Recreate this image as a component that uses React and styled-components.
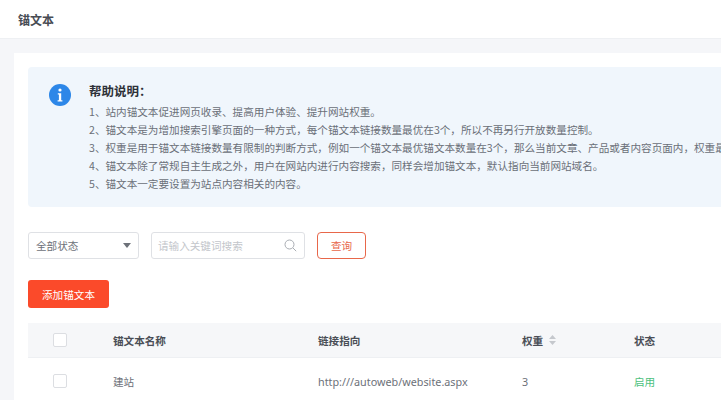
import styled, { createGlobalStyle } from "styled-components";

const GlobalStyle = createGlobalStyle`
  html, body {
    margin: 0;
    height: 400px;
    overflow: hidden;
    background: #f5f6f9;
    font-family: "Noto Sans CJK SC", "Noto Sans", sans-serif;
  }
`;

const Page = styled.div`
  width: 721px;
  height: 400px;
  overflow: hidden;
`;

const Header = styled.div`
  height: 38px;
  padding-left: 18px;
  background: #fff;
  border-bottom: 1px solid #eef0f3;
  display: flex;
  align-items: center;
  font-size: 12px;
  font-weight: 700;
  color: #484c54;
`;

const Card = styled.div`
  margin: 14px 0 0 14px;
  padding: 14px 0 0 14px;
  background: #fff;
  height: 347px;
  box-sizing: border-box;
`;

const Notice = styled.div`
  height: 140px;
  box-sizing: border-box;
  padding: 15px 0 0 21px;
  background: #f0f6fc;
  border-radius: 4px 0 0 4px;
  display: flex;
  gap: 18px;
  white-space: nowrap;
  overflow: hidden;
`;

const InfoIcon = styled.svg`
  width: 22px;
  height: 22px;
  flex: none;
  margin-top: 2px;
`;

const NoticeTitle = styled.div`
  font-size: 12.5px;
  font-weight: 700;
  line-height: 18px;
  margin-bottom: 3px;
  color: #2e3138;
`;

const NoticeLine = styled.div`
  font-size: 10.6px;
  line-height: 18px;
  color: #6a6f78;
`;

const Filters = styled.div`
  margin-top: 25px;
  display: flex;
  gap: 12px;
`;

const Select = styled.div`
  width: 111px;
  height: 27px;
  box-sizing: border-box;
  padding: 0 7px;
  border: 1px solid #dfe1e5;
  border-radius: 3px;
  display: flex;
  align-items: center;
  justify-content: space-between;
  font-size: 10.6px;
  color: #6d7179;
`;

const Caret = styled.span`
  width: 0;
  height: 0;
  border-left: 4px solid transparent;
  border-right: 4px solid transparent;
  border-top: 5px solid #6d7179;
`;

const Search = styled.div`
  width: 154px;
  height: 27px;
  box-sizing: border-box;
  padding: 0 7px 0 6px;
  border: 1px solid #dfe1e5;
  border-radius: 3px;
  display: flex;
  align-items: center;
  justify-content: space-between;
  font-size: 10.6px;
  color: #c3c6cb;
`;

const SearchIcon = styled.svg`
  width: 13px;
  height: 13px;
  fill: none;
  stroke: #a9adb3;
  stroke-width: 1;
`;

const QueryButton = styled.div`
  width: 49px;
  height: 27px;
  box-sizing: border-box;
  border: 1px solid #e8674a;
  border-radius: 4px;
  display: flex;
  align-items: center;
  justify-content: center;
  font-size: 10.6px;
  color: #e8674a;
`;

const AddButton = styled.div`
  margin-top: 21px;
  width: 81px;
  height: 28px;
  border-radius: 3px;
  background: #fb4a2a;
  display: flex;
  align-items: center;
  justify-content: center;
  font-size: 10.6px;
  color: #fff;
`;

const Row = styled.div`
  display: grid;
  grid-template-columns: 85px 205px 204px 112px 1fr;
  align-items: center;
  height: ${(p) => (p.$head ? "34px" : "46px")};
  margin-top: ${(p) => (p.$head ? "15px" : "0")};
  background: ${(p) => (p.$head ? "#f6f7f9" : "#fff")};
  border-bottom: ${(p) => (p.$head ? "1px solid #eef0f3" : "none")};
  font-size: 10.6px;
  font-weight: ${(p) => (p.$head ? 700 : 400)};
  color: ${(p) => (p.$head ? "#4a4e56" : "#6d7179")};
`;

const Checkbox = styled.span`
  display: block;
  width: 12px;
  height: 12px;
  margin-left: 25px;
  background: #fff;
  border: 1px solid #dcdee2;
  border-radius: 2px;
`;

const WeightHead = styled.span`
  display: flex;
  align-items: center;
  gap: 6px;
`;

const SortIcon = styled.svg`
  width: 7px;
  height: 10px;
  fill: #c5c8cd;
`;

const Url = styled.span`
  font-family: "Noto Sans", sans-serif;
  font-size: 10.8px;
`;

const Status = styled.span`
  color: #4cc17c;
`;

const lines = [
  "1、站内锚文本促进网页收录、提高用户体验、提升网站权重。",
  "2、锚文本是为增加搜索引擎页面的一种方式，每个锚文本链接数量最优在3个，所以不再另行开放数量控制。",
  "3、权重是用于锚文本链接数量有限制的判断方式，例如一个锚文本最优锚文本数量在3个，那么当前文章、产品或者内容页面内，权重最高的优先展示。",
  "4、锚文本除了常规自主生成之外，用户在网站内进行内容搜索，同样会增加锚文本，默认指向当前网站域名。",
  "5、锚文本一定要设置为站点内容相关的内容。",
];

export default function App() {
  return (
    <Page>
      <GlobalStyle />
      <Header>锚文本</Header>
      <Card>
        <Notice>
          <InfoIcon viewBox="0 0 22 22">
            <circle cx="11" cy="11" r="11" fill="#2d87e8" />
            <circle cx="11" cy="6" r="1.6" fill="#fff" />
            <path d="M8.8 9.2h3.4v7h1.2v1.4H8.6v-1.4h1.3v-5.6H8.8z" fill="#fff" />
          </InfoIcon>
          <div>
            <NoticeTitle>帮助说明：</NoticeTitle>
            {lines.map((line) => (
              <NoticeLine key={line}>{line}</NoticeLine>
            ))}
          </div>
        </Notice>
        <Filters>
          <Select>
            全部状态
            <Caret />
          </Select>
          <Search>
            请输入关键词搜索
            <SearchIcon viewBox="0 0 13 13">
              <circle cx="5.5" cy="5.5" r="4.5" />
              <path d="M9 9l3.2 3.2" />
            </SearchIcon>
          </Search>
          <QueryButton>查询</QueryButton>
        </Filters>
        <AddButton>添加锚文本</AddButton>
        <Row $head>
          <Checkbox />
          <span>锚文本名称</span>
          <span>链接指向</span>
          <WeightHead>
            权重
            <SortIcon viewBox="0 0 7 10">
              <path d="M3.5 0L7 4H0zM3.5 10L0 6h7z" />
            </SortIcon>
          </WeightHead>
          <span>状态</span>
        </Row>
        <Row>
          <Checkbox />
          <span>建站</span>
          <Url>http:///autoweb/website.aspx</Url>
          <Url>3</Url>
          <Status>启用</Status>
        </Row>
      </Card>
    </Page>
  );
}
